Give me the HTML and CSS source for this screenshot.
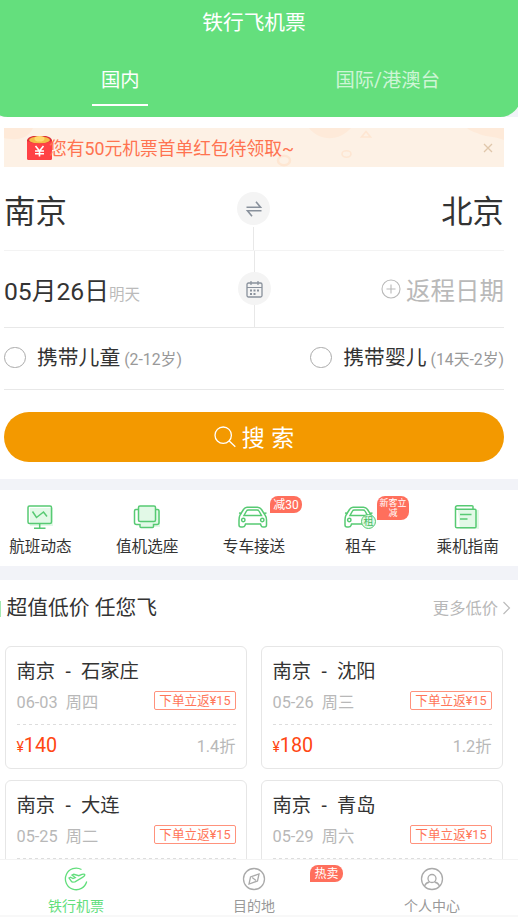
FILE: index.html
```html
<!DOCTYPE html>
<html lang="zh-CN">
<head>
<meta charset="utf-8">
<title>铁行飞机票</title>
<link rel="stylesheet" href="styles.css">
</head>
<body>
<main class="content">
  <div class="top">
    <header class="header">
      <h1 class="title">铁行飞机票</h1>
      <div class="tabs">
        <div class="tab active"><span>国内</span></div>
        <div class="tab"><span>国际/港澳台</span></div>
      </div>
    </header>
  </div>
  <section class="form">
    <div class="banner">
      <svg class="banner-bg" width="500" height="39" viewBox="0 0 500 39">
        <path d="M0 0H29C23 13 9 12 0 10ZM305 0H347C336 13 316 14 305 0ZM463 0H500V12C490 8 480 9 473 5Q466 3 463 0Z" fill="#feead9"/>
        <g fill="none" stroke="#fee6d2" stroke-width="1.6"><path d="M362 3.500l4.500 5.500h-9z"/><ellipse cx="342.500" cy="26" rx="4.500" ry="3.200"/><ellipse cx="280" cy="32.500" rx="6" ry="4.800" stroke-width="2.500"/></g>
      </svg>
      <svg class="packet" width="27" height="26" viewBox="0 0 27 26">
        <path d="M1 5Q2 2 7 1H20Q25 2 26 5V23Q26 25 24 25H3Q1 25 1 23Z" fill="#dc3038"/>
        <ellipse cx="13.500" cy="5" rx="10.500" ry="3.500" fill="#f5bd48"/>
        <ellipse cx="13.500" cy="3.800" rx="5" ry="2.800" fill="#ffdc70"/>
        <path d="M1 6Q13 11 26 6V23Q26 25 24 25H3Q1 25 1 23Z" fill="#ff4145"/>
        <path d="M9.500 11l4 5 4-5M13.500 16v5.500M9 16h9M9 18.800h9" fill="none" stroke="#fff" stroke-width="1.600"/>
      </svg>
      <span class="banner-text">您有50元机票首单红包待领取~</span>
      <svg class="close" width="10" height="10" viewBox="0 0 10 10"><path d="M1 1l8 8M9 1L1 9" fill="none" stroke="#e0c7ab" stroke-width="1.300"/></svg>
    </div>
    <div class="row cities">
      <span class="city">南京</span>
      <div class="middle">
        <span class="disc"><svg width="18" height="18" viewBox="0 0 18 18"><path d="M1.500 7.200H15.500L11 1.800M16.500 10.800H2.500L7 16.200" fill="none" stroke="#89919c" stroke-width="1.600"/></svg></span>
        <i class="stem"></i>
      </div>
      <span class="city right">北京</span>
    </div>
    <div class="row dates">
      <span class="date">05月26日<small>明天</small></span>
      <div class="middle">
        <i class="stem"></i>
        <span class="disc"><svg width="17" height="18" viewBox="0 0 17 18"><g fill="none" stroke="#89919c"><rect x="1" y="3" width="15" height="14" rx="1.500" stroke-width="1.300"/><path d="M1 7.500H16M5 1V5M12 1V5" stroke-width="1.200"/><path d="M4 10.500h2M7.500 10.500h2M11 10.500h2M4 14h2M7.500 14h2" stroke-width="1.800"/></g></svg></span>
        <i class="stem"></i>
      </div>
      <span class="return"><svg width="20" height="20" viewBox="0 0 20 20"><g fill="none" stroke="#b9b9b9" stroke-width="1.100"><circle cx="10" cy="10" r="9"/><path d="M10 5.500v9M5.500 10h9"/></g></svg>返程日期</span>
    </div>
    <div class="row riders">
      <label class="rider"><i class="radio"></i><b>携带儿童</b><small>(2-12岁)</small></label>
      <label class="rider"><i class="radio"></i><b>携带婴儿</b><small>(14天-2岁)</small></label>
    </div>
    <div class="search"><svg width="22" height="22" viewBox="0 0 22 22"><g fill="none" stroke="#fff" stroke-width="1.300"><circle cx="9.200" cy="9.200" r="8.200"/><path d="M15 14.700l6.300 6"/></g></svg><span>搜 索</span></div>
  </section>
  <section class="services">
    <div class="service">
      <svg width="32" height="28" viewBox="0 0 32 28"><rect x="6" y="5" width="23" height="18" fill="#e2f9e7"/><g fill="none" stroke="#57ca73" stroke-width="1.500"><rect x="4" y="3" width="23.500" height="17.500" rx="1.500"/><path d="M8.500 8.500l4 6 7-5.500 3.500 4.500M15.700 20.500V25M10 25.300H21.500"/></g></svg>
      <span>航班动态</span>
    </div>
    <div class="service">
      <svg width="32" height="28" viewBox="0 0 32 28"><path d="M8 7h21v17H10z" fill="#e2f9e7"/><g fill="none" stroke="#57ca73" stroke-width="1.500"><path d="M7 6.500H5Q3.500 6.500 3.500 8V19.500Q3.500 21.500 5.500 21.500H9V23.500Q9 24.500 10 24.500H21.500Q22.500 24.500 22.500 23.500V21.500H26Q28 21.500 28 19.500V8Q28 6.500 26.500 6.500H24.500"/><rect x="7.500" y="3" width="17" height="15.500" rx="1.500" fill="#e2f9e7"/></g></svg>
      <span>值机选座</span>
    </div>
    <div class="service">
      <svg width="32" height="28" viewBox="0 0 32 28"><path id="car" d="M3 12L6.500 6.500Q8 4.200 10 4.200H20.500Q23 4.200 24.500 6.500L28 12Q29.500 14 29.500 17V22Q29.500 24 27.500 24H26Q24.500 24 24 22.500L23.500 21H8.500L8 22.500Q7.500 24 5.500 24H4Q2 24 2 22V17Q2 14 3 12M2 10L5 10.500M26.500 10.500L29.500 10M7 12.500H24.500L22 8Q21.500 7 20 7H11.500Q10 7 9.500 8ZM8 17a1.700 1.700 0 1 1-3.400 0a1.700 1.700 0 1 1 3.400 0M27 17a1.700 1.700 0 1 1-3.400 0a1.700 1.700 0 1 1 3.400 0" fill="none" stroke="#57ca73" stroke-width="1.500"/></svg>
      <span>专车接送</span>
      <em class="tag">减30</em>
    </div>
    <div class="service">
      <div class="rental"><svg width="32" height="28" viewBox="0 0 32 28"><use href="#car" x="-1"/></svg><b class="rent-mark">租</b></div>
      <span>租车</span>
      <em class="tag small">新客立减</em>
    </div>
    <div class="service">
      <svg width="32" height="28" viewBox="0 0 32 28"><path d="M7 7h21v19H9z" fill="#e2f9e7"/><path d="M22 6V3.500Q22 2.700 21 2.700H6.500Q4.500 2.700 4.500 4.500V23.500Q4.500 24.800 6 24.800H24Q25 24.800 25 23.800V7.500Q25 6.200 24 6.200H6Q4.500 6 4.500 4.500M9 11.500H20.500M9 16H16.500" fill="none" stroke="#57ca73" stroke-width="1.500"/></svg>
      <span>乘机指南</span>
    </div>
  </section>
  <section class="deals">
    <div class="deals-head"><h2>超值低价 任您飞</h2><span class="more">更多低价<svg width="9" height="14" viewBox="0 0 9 14"><path d="M1.500 1L7.500 7l-6 6" fill="none" stroke="#bbb" stroke-width="1.200"/></svg></span></div>
    <div class="cards">
      <article class="card"><h3>南京<i>-</i>石家庄</h3><div class="line"><span>06-03&nbsp; 周四</span><em>下单立返¥15</em></div><div class="fare"><strong><small>¥</small>140</strong><span>1.4折</span></div></article>
      <article class="card"><h3>南京<i>-</i>沈阳</h3><div class="line"><span>05-26&nbsp; 周三</span><em>下单立返¥15</em></div><div class="fare"><strong><small>¥</small>180</strong><span>1.2折</span></div></article>
      <article class="card"><h3>南京<i>-</i>大连</h3><div class="line"><span>05-25&nbsp; 周二</span><em>下单立返¥15</em></div><div class="fare"></div></article>
      <article class="card"><h3>南京<i>-</i>青岛</h3><div class="line"><span>05-29&nbsp; 周六</span><em>下单立返¥15</em></div><div class="fare"></div></article>
    </div>
  </section>
</main>
<nav class="nav">
  <div class="nav-item on">
    <svg width="24" height="24" viewBox="0 0 24 24"><g fill="none" stroke="#62de7c" stroke-width="1.300"><path d="M17.500 2.500A10.800 10.800 0 1 0 22.700 14.500"/><path d="M5 11l1.500-.8 2.500 1.300 2.300-1-3.300-2.300 1.800-.9 5 1.400 3.200-1.300q2.600-.7 2.900.4 0 1.200-2 2.300L11 14.900l-2.300.3q-1.200-.2-2-1.800z"/></g></svg>
    <span>铁行机票</span>
  </div>
  <div class="nav-item">
    <svg width="24" height="24" viewBox="0 0 24 24"><g fill="none" stroke="#aaa" stroke-width="1.300"><circle cx="12" cy="12" r="10.500"/><path d="M17 7l-1.500 7L7 17l1.500-7zM10.200 10.500l3.800 3"/></g></svg>
    <span>目的地</span>
    <em class="tag hot">热卖</em>
  </div>
  <div class="nav-item">
    <svg width="24" height="24" viewBox="0 0 24 24"><g fill="none" stroke="#aaa" stroke-width="1.300"><circle cx="12" cy="12" r="10.500"/><circle cx="12" cy="11.500" r="4"/><path d="M4.500 19q1.500-3.500 5-4M19.500 19q-1.500-3.500-5-4"/></g></svg>
    <span>个人中心</span>
  </div>
</nav>
</body>
</html>
```
FILE: styles.css
```css
* { box-sizing: border-box; }
body {
  margin: 0;
  height: 917px;
  overflow: hidden;
  background: #fff;
  color: #333;
  font-family: Roboto, "Noto Sans CJK SC", sans-serif;
  white-space: nowrap;
}
h1, h2, h3 { margin: 0; font-weight: 400; }
i, em { font-style: normal; }
b, strong { font-weight: 400; }
svg { display: block; flex: none; }

.content { height: 859px; overflow: hidden; }
.top { height: 117px; background: #f2f3f8; }
.header {
  height: 117px;
  margin: 0 -3px 0 -13px;
  background: #64df7d;
  border-radius: 0 0 21px 21px;
  color: #fff;
}
.title { height: 42px; line-height: 46px; font-size: 20.700px; text-align: center; }
.tabs { display: flex; }
.tab { flex: 1; height: 64px; display: flex; justify-content: center; font-size: 19.300px; line-height: 78px; color: rgba(255, 255, 255, .7); }
.tab.active { padding-right: 1px; color: #fff; }
.tab.active span { width: 56px; text-align: center; border-bottom: 2px solid #fff; }

.form { height: 362px; padding: 11px 14px 0 4px; }
.banner { position: relative; height: 39px; display: flex; align-items: center; padding: 0 11px 0 22px; background: #fdf1e5; }
.banner-bg { position: absolute; left: 0; top: 0; }
.packet { margin-right: -4px; }
.banner-text { position: relative; padding-top: 3px; font-size: 17.750px; line-height: 38px; color: #ff7350; }
.close { position: relative; margin-left: auto; }

.row { display: flex; justify-content: space-between; border-bottom: 1px solid #e8e8e8; }
.cities { height: 84px; border-color: #f3f3f3; }
.city { flex: 1; font-size: 31.400px; line-height: 91px; }
.right { text-align: right; }
.middle { width: 35px; display: flex; flex-direction: column; align-items: center; }
.cities .middle { padding: 25px 1px 0 0; gap: 2px; }
.disc { width: 33px; height: 33px; flex: none; display: flex; align-items: center; justify-content: center; border-radius: 50%; background: #f4f4f4; }
.stem { width: 1px; flex: 1; background: #e8e8e8; }
.dates { height: 77px; }
.dates .stem:last-child { flex: 0 0 22px; }
.date { flex: 1; font-size: 24.700px; line-height: 81px; }
.date small { font-size: 15.500px; color: #bbb; }
.return { flex: 1; display: flex; align-items: center; justify-content: flex-end; gap: 5px; font-size: 24.500px; color: #b9b9b9; }
.riders { height: 62px; align-items: center; }
.rider { display: flex; align-items: baseline; line-height: 65px; }
.radio { width: 21.500px; height: 21.500px; align-self: center; margin: 0 11.500px 2px 0; border: 1px solid #aaa; border-radius: 50%; }
.rider b { font-size: 20.800px; }
.rider small { margin-left: 4px; font-size: 15.800px; color: #999; }
.search { height: 50px; margin-top: 22px; display: flex; align-items: center; justify-content: center; gap: 6px; border-radius: 25px; background: #f39900; color: #fff; font-size: 23px; line-height: 54px; word-spacing: 1px; }
.search span { height: 50px; }

.services { display: flex; height: 101px; padding-top: 13px; margin: 0 -3px 0 -13px; border: solid #f2f3f8; border-width: 11px 0 14px; }
.service { position: relative; flex: 1; display: flex; flex-direction: column; align-items: center; font-size: 15.600px; line-height: 32px; }
.service > svg, .rental { margin-right: 1px; }
.rental { position: relative; }
.rent-mark { position: absolute; left: 17px; top: 11px; width: 15px; height: 15px; border: 1px solid #57ca73; border-radius: 50%; background: #e2f9e7; color: #42ba60; font-size: 10px; line-height: 13px; text-align: center; text-indent: -.5px; }
.tag { position: absolute; left: 69.500px; top: -7px; width: 32px; height: 17px; border-radius: 8px 8px 8px 0; background: #ff6f5c; color: #fff; font-size: 12px; line-height: 18px; text-align: center; }
.small { height: 24px; font-size: 9px; line-height: 10px; padding: 2px 2px 0; white-space: normal; }

.deals-head { display: flex; justify-content: space-between; height: 66px; padding: 0 7px 0 0; line-height: 57px; }
.deals-head h2 { display: flex; align-items: center; gap: 5.500px; height: 57px; font-size: 20.750px; }
.deals-head h2::before { content: ""; width: 1px; height: 16px; background: #a4e9b2; }
.more { display: flex; align-items: center; gap: 4px; height: 56px; font-size: 16.300px; color: #b8b8b8; }
.cards { display: grid; grid-template-columns: 242px 242px; gap: 11px 14px; padding-left: 5px; }
.card { height: 123px; border: 1px solid #e6e6e6; border-radius: 6px; padding: 0 10.500px 0 10.500px; }
.card h3 { height: 43px; font-size: 19.300px; line-height: 50px; }
.card h3 i { display: inline-block; width: 26px; text-align: center; }
.line { height: 35px; display: flex; align-items: flex-start; justify-content: space-between; font-size: 16.300px; line-height: 25px; color: #b8b8b8; background: repeating-linear-gradient(90deg, #ddd 0 3px, transparent 3px 6px) bottom / 100% 1px no-repeat; }
.line em { margin-top: 1px; height: 19px; padding: 0 4px; border: 1px solid #ff927c; border-radius: 2px; color: #ff7659; font-size: 12.600px; line-height: 18px; }
.fare { display: flex; justify-content: space-between; line-height: 43px; font-size: 16.300px; color: #b8b8b8; }
.fare strong { font-size: 19.800px; line-height: 42px; color: #ff4713; }
.fare small { font-size: 14px; }

.nav { position: relative; display: flex; height: 58px; margin: 0 -3px 0 -13px; padding-top: 7px; border-top: 1px solid #f3f3f3; border-bottom: 2px solid #f8f8f8; background: #fff; }
.nav-item { position: relative; flex: 1; display: flex; flex-direction: column; align-items: center; font-size: 14px; line-height: 30px; color: #999; }
.on { color: #62de7c; }
.hot { left: 145px; top: -2px; width: 33px; }
```
